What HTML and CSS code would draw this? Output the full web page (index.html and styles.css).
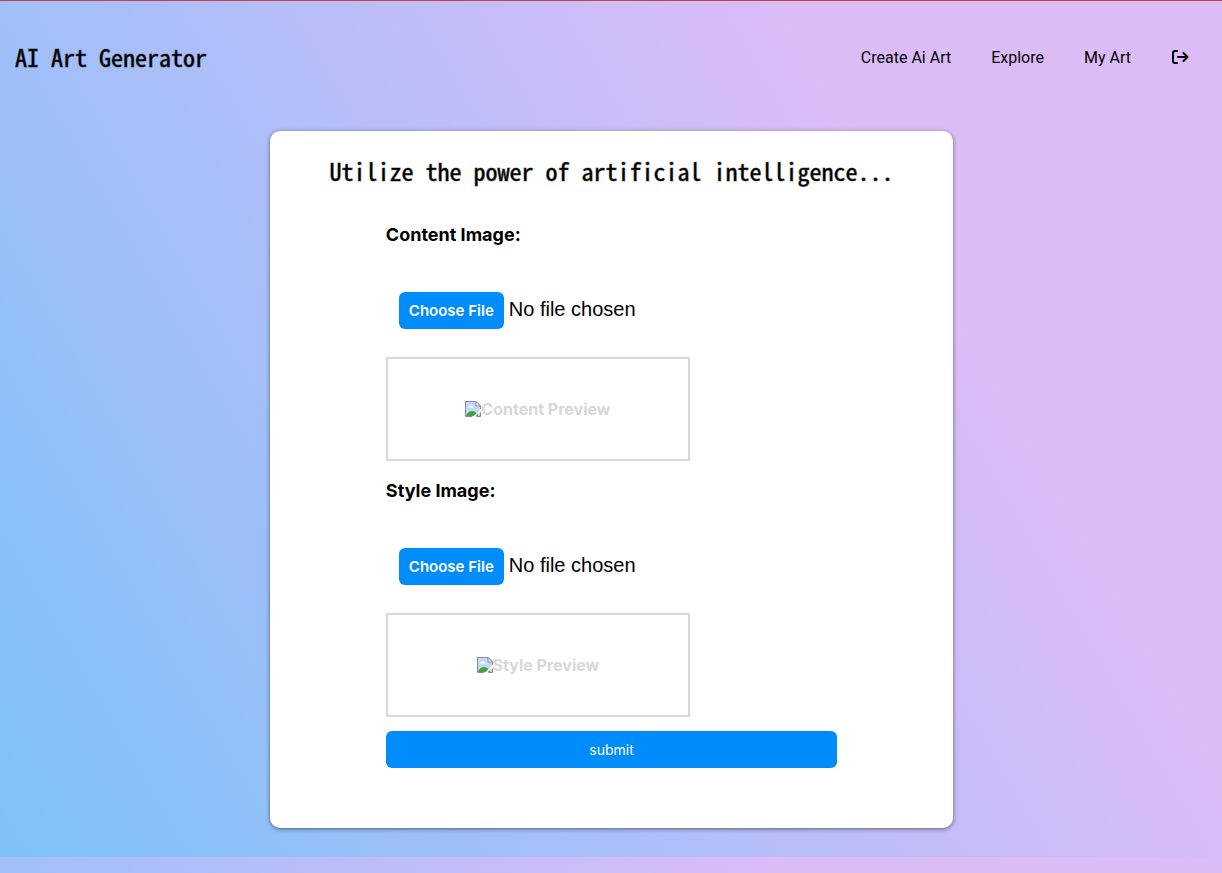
FILE: index.html
```html
<!DOCTYPE html>
<html lang="en">
<head>
<meta charset="utf-8">
<meta name="viewport" content="width=device-width, initial-scale=1">
<title>AI Art Generator</title>
<link rel="stylesheet" href="styles.css">
</head>
<body>
<svg class="defs" width="0" height="0" aria-hidden="true">
  <symbol id="missing-image" viewBox="0 0 16 16">
    <path d="M.5.5h10.500l4.500 4.500v10.500H.5z" fill="#c3d9f8"/>
    <path d="M3 6.500c0-1.200 1.300-1.800 2-1.200.4-1.300 2.300-1.200 2.500.2 1 0 1.300.5 1.300 1z" fill="#fff"/>
    <path d="M1 15c1-3.300 3.600-5 6-5s5 1.700 6.500 5z" fill="#43a33c"/>
    <path d="M16 8v2L10 16H7.500z" fill="#fff"/>
    <path d="M7 15.500H.5V.5H11l4.500 4.500v3M15.500 11.500v4H11.500" fill="none" stroke="#8b8b8b"/>
    <path d="M11 .5V5h4.500z" fill="#fff" stroke="#8b8b8b"/>
  </symbol>
</svg>
<header class="navbar">
  <h1 class="heading">AI Art Generator</h1>
  <nav class="links">
    <a href="#create">Create Ai Art</a>
    <a href="#explore">Explore</a>
    <a href="#my-art">My Art</a>
    <a href="#logout" class="logout" aria-label="Log out">
      <svg viewBox="0 0 18 16" width="18" height="16" fill="none" stroke="currentColor" stroke-width="2" stroke-linecap="round" stroke-linejoin="round">
        <path d="M6 2H4a2 2 0 0 0-2 2v8a2 2 0 0 0 2 2h2"/>
        <path d="M7 8h9.500M12.500 4l4 4-4 4"/>
      </svg>
    </a>
  </nav>
</header>
<main class="card">
  <h2 class="heading">Utilize the power of artificial intelligence...</h2>
  <form class="form">
    <label class="label" for="content-file">Content Image:</label>
    <input class="file" id="content-file" type="file">
    <div class="preview"><svg width="16" height="16" aria-hidden="true"><use href="#missing-image"/></svg><span>Content Preview</span></div>
    <label class="label" for="style-file">Style Image:</label>
    <input class="file" id="style-file" type="file">
    <div class="preview"><svg width="16" height="16" aria-hidden="true"><use href="#missing-image"/></svg><span>Style Preview</span></div>
    <button class="submit" type="submit">submit</button>
  </form>
</main>
</body>
</html>
```
FILE: styles.css
```css
* {
  box-sizing: border-box;
}

html {
  border-top: 1px solid #c0434f;
  background: linear-gradient(60deg, #7cc1f9 0%, #dcbcf7 75%);
}

body {
  margin: 0;
  padding: 0 0 29px 1px;
  font-family: Inter, "Liberation Sans", sans-serif;
  color: #000;
}

.defs {
  display: block;
}

.heading {
  margin: 0;
  font: 400 24px/34px "Noto Sans Mono CJK JP", "DejaVu Sans Mono", monospace;
  -webkit-text-stroke: 1px rgba(0, 0, 0, 0.5);
}

.navbar {
  display: flex;
  align-items: center;
  justify-content: space-between;
  height: 112px;
  padding: 0 33px 0 14px;
}

.links {
  display: flex;
  align-items: center;
  gap: 40px;
  font-family: Roboto, "Liberation Sans", sans-serif;
  font-size: 16px;
}

.links a {
  color: inherit;
  text-decoration: none;
}

.logout {
  display: flex;
}

.card {
  width: 56%;
  margin: 18px auto 0;
  padding: 23px 0 60px;
  border-radius: 10px;
  background: #fff;
  box-shadow: 0 1px 4px rgba(0, 0, 0, 0.5);
}

.card .heading {
  text-align: center;
  white-space: nowrap;
}

.form {
  display: flex;
  flex-direction: column;
  align-items: flex-start;
  width: 66%;
  margin: 35px auto 0;
}

.label {
  font-size: 18px;
  font-weight: 700;
  line-height: 24px;
}

.file {
  width: 100%;
  margin: 43px 0 28px;
  padding: 0 13px;
  font: 20px/38px "Liberation Sans", Arial, sans-serif;
  color: #000;
}

.file::file-selector-button,
.submit {
  height: 37px;
  border: 0;
  border-radius: 6px;
  background: #008cfa;
  color: #fff;
  cursor: pointer;
}

.file::file-selector-button {
  margin: 0 5px 0 0;
  padding: 0 10px;
  font: 600 15px Inter, "Liberation Sans", sans-serif;
}

.preview {
  display: flex;
  align-items: center;
  justify-content: center;
  width: 304px;
  max-width: 100%;
  height: 104px;
  margin-bottom: 18px;
  border: 2px solid #d8d8d8;
  font-size: 16px;
  font-weight: 700;
  color: #d8d8d8;
}

.submit {
  width: 100%;
  margin-top: -4px;
  font: 14px Inter, "Liberation Sans", sans-serif;
}
```
